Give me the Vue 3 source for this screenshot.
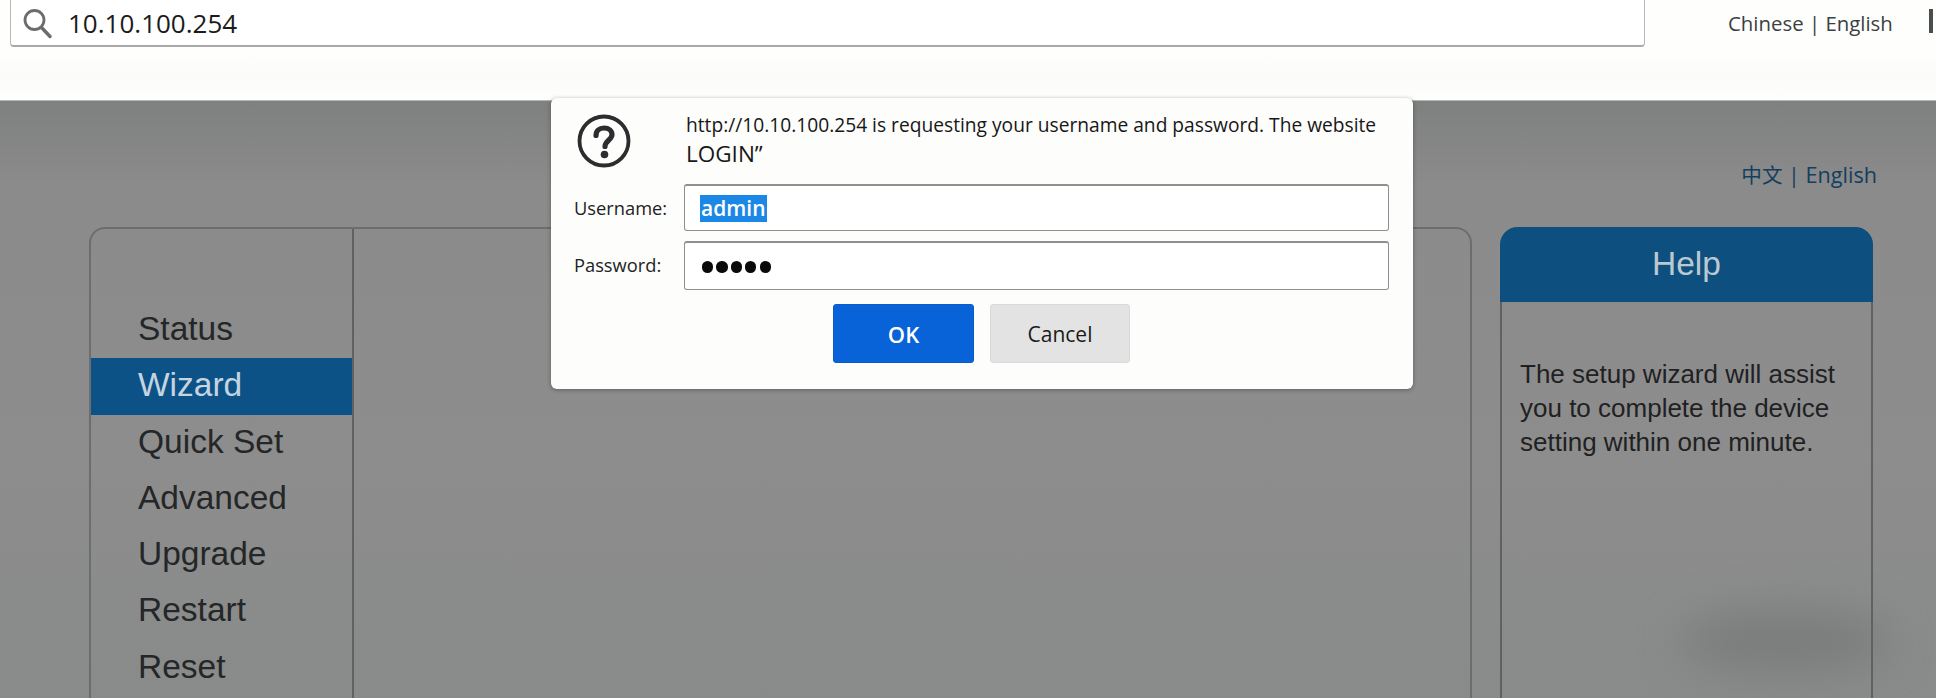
<script setup>
const menu = ['Status', 'Wizard', 'Quick Set', 'Advanced', 'Upgrade', 'Restart', 'Reset']
</script>

<template>
  <div class="screen">
    <header class="browser">
      <div class="address">
        <svg class="search" width="30" height="32" viewBox="0 0 30 32" fill="none">
          <circle cx="12.5" cy="13" r="9.5" stroke="#6a6c6e" stroke-width="2.8" />
          <path d="M19.5 20.5L28 29.5" stroke="#6a6c6e" stroke-width="3.4" stroke-linecap="round" />
        </svg>
        <span class="url">10.10.100.254</span>
      </div>
      <div class="browser-lang">Chinese | English</div>
      <div class="edge"></div>
    </header>

    <main class="page">
      <div class="page-lang"><span class="cjk">中文</span> | English</div>
      <div class="panels">
        <section class="panel">
          <nav class="sidebar">
            <div v-for="item in menu" :key="item" class="item" :class="{ active: item === 'Wizard' }">{{ item }}</div>
          </nav>
        </section>
        <aside class="help">
          <h2 class="help-title">Help</h2>
          <p class="help-text">The setup wizard will assist you to complete the device setting within one minute.</p>
        </aside>
      </div>
      <div class="smudge"></div>
    </main>

    <div class="dialog">
      <div class="message">
        <svg class="question" width="56" height="56" viewBox="0 0 56 56" fill="none">
          <circle cx="28" cy="28" r="24.5" stroke="#2b2d2e" stroke-width="3.8" />
          <path d="M20 22.5C20 17.5 23.5 15 28 15C33 15 36 17.8 36 21.5C36 27 29 27.5 29 33.5" stroke="#2b2d2e" stroke-width="5.2" stroke-linecap="round" />
          <circle cx="28.5" cy="41.5" r="3.8" fill="#2b2d2e" />
        </svg>
        <div class="message-text">
          <div class="line-one">http://10.10.100.254 is requesting your username and password. The website</div>
          <div class="line-two">LOGIN”</div>
        </div>
      </div>
      <div class="field username">
        <span class="label">Username:</span>
        <div class="input"><span class="selected">admin</span></div>
      </div>
      <div class="field password">
        <span class="label">Password:</span>
        <div class="input dots">
          <i></i><i></i><i></i><i></i><i></i>
        </div>
      </div>
      <div class="actions">
        <button class="btn ok">OK</button>
        <button class="btn cancel">Cancel</button>
      </div>
    </div>
  </div>
</template>

<style>
html, body { margin: 0; overflow: hidden; }
</style>

<style scoped>
.screen {
  position: relative;
  width: 1936px;
  height: 698px;
  overflow: hidden;
  display: flex;
  flex-direction: column;
  background: #8a8b8b;
  font-family: "Liberation Sans", Arial, sans-serif;
}
.browser {
  height: 101px;
  flex: none;
  display: flex;
  align-items: flex-start;
  background: linear-gradient(#fefefd 50%, #fbfbfa 75%, #fefefd);
  border-bottom: 1px solid #b4b6b7;
  box-sizing: border-box;
}
.address {
  width: 1635px;
  height: 48px;
  margin: -1px 0 0 10px;
  flex: none;
  display: flex;
  align-items: center;
  box-sizing: border-box;
  background: #fff;
  border: 1px solid #b9b9b9;
  border-bottom: 2px solid #a9a9a9;
  border-radius: 0 0 4px 4px;
}
.search { margin: 0 0 0 11px; flex: none; }
.url {
  margin-left: 16px;
  font: 26px "Open Sans", sans-serif;
  color: #1b1b1b;
}
.browser-lang {
  margin: 8px 0 0 83px;
  font: 20.4px/30px "Open Sans", sans-serif;
  color: #3b3f42;
  white-space: nowrap;
  width: 201px;
}
.edge {
  width: 4px;
  height: 24px;
  margin-top: 9px;
  background: #4a4d4f;
}
.page {
  position: relative;
  flex: 1;
  min-height: 0;
  background: linear-gradient(#7f8080, #8b8b8b 14%, #8d8d8d 60%, #898a8a);
}
.page-lang {
  height: 126px;
  box-sizing: border-box;
  padding: 58px 59px 0 0;
  text-align: right;
  font: 21.6px/30px "Open Sans", sans-serif;
  color: #123f60;
}
.cjk { font-family: "Noto Sans CJK SC", sans-serif; font-size: 20.6px; }
.panels {
  display: flex;
  gap: 29px;
  margin-left: 89px;
  height: 480px;
}
.panel {
  width: 1383px;
  flex: none;
  box-sizing: border-box;
  border: 2px solid #6b6d6e;
  border-bottom: none;
  border-radius: 16px 16px 0 0;
}
.sidebar {
  width: 263px;
  height: 100%;
  box-sizing: border-box;
  padding-top: 73px;
  border-right: 2px solid #5f6162;
}
.item {
  height: 56.3px;
  padding-left: 47px;
  font-size: 33.5px;
  line-height: 54px;
  color: #242627;
}
.item.active {
  background: #0c5286;
  color: #c4d4e0;
}
.help {
  position: relative;
  z-index: 1;
  width: 373px;
  box-sizing: border-box;
  border: 2px solid #5f6162;
  border-top: none;
  border-bottom: none;
  border-radius: 18px 18px 0 0;
  margin-left: -1px;
}
.help-title {
  height: 75px;
  margin: 0 -2px;
  background: #0d4f7f;
  border-radius: 18px 18px 0 0;
  text-align: center;
  font-weight: 400;
  font-size: 33.5px;
  line-height: 74px;
  color: #bcc8d1;
}
.help-text {
  margin: 55px 0 0 18px;
  width: 345px;
  font-size: 26px;
  line-height: 34px;
  color: #1f2122;
}
.smudge {
  position: absolute;
  left: 1680px;
  top: 510px;
  width: 210px;
  height: 60px;
  border-radius: 50%;
  background: #7b7c7c;
  filter: blur(20px);
}
.dialog {
  position: absolute;
  left: 551px;
  top: 98px;
  width: 862px;
  height: 291px;
  box-sizing: border-box;
  padding: 12px 23px 0;
  display: flex;
  flex-direction: column;
  background: #fdfdfc;
  border-radius: 6px;
  box-shadow: 0 1px 4px rgba(40, 40, 40, 0.45);
  font-family: "Open Sans", sans-serif;
}
.message {
  height: 74px;
  display: flex;
}
.question { margin: 3px 0 0 2px; flex: none; }
.message-text { margin-left: 55px; color: #171717; white-space: nowrap; }
.line-one { font-size: 19.2px; line-height: 30px; margin-left: -1px; }
.line-two { font-size: 22.5px; line-height: 28px; margin: 0 0 0 -1px; }
.field {
  display: flex;
  align-items: center;
}
.username { height: 47px; }
.password { height: 49px; margin-top: 10px; }
.label {
  width: 110px;
  flex: none;
  font-size: 18.3px;
  color: #222;
}
.password .label { position: relative; top: -1px; }
.input {
  width: 705px;
  height: 100%;
  box-sizing: border-box;
  display: flex;
  align-items: center;
  padding-left: 15px;
  background: #fff;
  border: 1px solid #8f8f8f;
  border-top-width: 2px;
  border-radius: 3px;
}
.selected {
  background: #1b87e6;
  color: #fff;
  font-size: 21px;
  font-weight: 600;
  line-height: 27px;
  padding: 0 1px;
}
.dots { gap: 3.2px; padding: 2px 0 0 17px; }
.dots i {
  width: 11.2px;
  height: 11.2px;
  border-radius: 50%;
  background: #0a0a0a;
}
.actions {
  display: flex;
  gap: 16px;
  margin: 14px 0 0 259px;
}
.btn {
  width: 141px;
  height: 59px;
  padding: 0;
  border-radius: 3px;
  font-family: "Open Sans", sans-serif;
}
.ok {
  background: #0862d8;
  border: 1px solid #0b5cc6;
  color: #fff;
  font-size: 22px;
  font-weight: 600;
}
.cancel {
  width: 140px;
  background: #e3e3e3;
  border: 1px solid #d9d9d9;
  color: #1a1a1a;
  font-size: 21px;
}
</style>
